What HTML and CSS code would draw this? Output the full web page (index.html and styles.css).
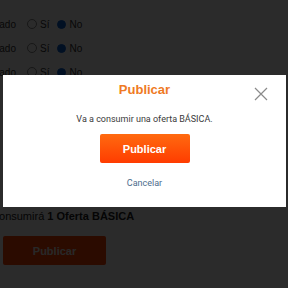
FILE: index.html
```html
<!DOCTYPE html>
<html lang="es">
<head>
<meta charset="utf-8">
<link rel="stylesheet" href="styles.css">
</head>
<body>
<div class="page">
  <div class="rows">
    <div class="row"><span class="lbl">Certificado</span><span class="radio"></span><span class="opt">Sí</span><span class="radio on"></span><span class="opt">No</span></div>
    <div class="row"><span class="lbl">Certificado</span><span class="radio"></span><span class="opt">Sí</span><span class="radio on"></span><span class="opt">No</span></div>
    <div class="row"><span class="lbl">Certificado</span><span class="radio"></span><span class="opt">Sí</span><span class="radio on"></span><span class="opt">No</span></div>
  </div>
  <p class="note">Se consumirá <b>1 Oferta BÁSICA</b></p>
  <button class="pub-bg">Publicar</button>
</div>
<div class="overlay"></div>
<div class="modal">
  <div class="head">
    <h2 class="title">Publicar</h2>
    <svg class="close" width="14" height="14" viewBox="0 0 14 14"><path d="M1 1L13 13M13 1L1 13" stroke="#8a8a8a" stroke-width="1.2" fill="none"/></svg>
  </div>
  <p class="msg">Va a consumir una oferta BÁSICA.</p>
  <button class="pub">Publicar</button>
  <a class="cancel">Cancelar</a>
</div>
</body>
</html>
```
FILE: styles.css
```css
html, body { margin: 0; padding: 0; }
body { width: 288px; height: 288px; overflow: hidden; background: #fff; font-family: "Liberation Sans", Arial, sans-serif; position: relative; }
.page { padding-top: 17px; }
.rows { display: flex; flex-direction: column; gap: 10px; margin-left: -38px; }
.row { display: flex; align-items: center; height: 14px; font-size: 10px; color: #333; }
.lbl { width: 54px; text-align: right; }
.radio { width: 10px; height: 10px; border: 1px solid #888; border-radius: 50%; box-sizing: border-box; margin-left: 11px; margin-right: 3px; }
.radio.on { width: 9px; height: 9px; background: #0a5fd0; border-color: #0a5fd0; margin-left: 8px; margin-right: 3px; }
.note { margin: 131px 0 0 -23px; font-size: 11px; color: #222; }
.pub-bg { margin: 14px 0 0 3px; width: 103px; height: 29px; border: 0; border-radius: 2px; background: #ff4000; color: #eee; font: bold 11px "Liberation Sans", Arial, sans-serif; }
.overlay { position: absolute; inset: 0; background: rgba(0,0,0,0.83); }
.modal { position: absolute; left: 3px; top: 75px; width: 283px; height: 132px; background: #fff; display: flex; flex-direction: column; align-items: center; box-sizing: border-box; }
.head { width: 100%; position: relative; display: flex; justify-content: center; }
.title { margin: 7px 0 0; font-size: 13px; font-weight: bold; color: #ef7a24; line-height: 16px; }
.close { position: absolute; right: 18px; top: 12px; }
.msg { margin: 15px 0 0; font-size: 9px; color: #3a3a3a; line-height: 12px; font-family: Roboto, sans-serif; }
.pub { margin-top: 9px; width: 90px; height: 29px; border: 0; border-radius: 2px; background: linear-gradient(#ff6a10, #ff3c00); color: #fff; font: bold 11px "Liberation Sans", Arial, sans-serif; }
.cancel { margin-top: 15px; font-size: 9px; color: #4d6c8c; font-family: Roboto, sans-serif; }
```
